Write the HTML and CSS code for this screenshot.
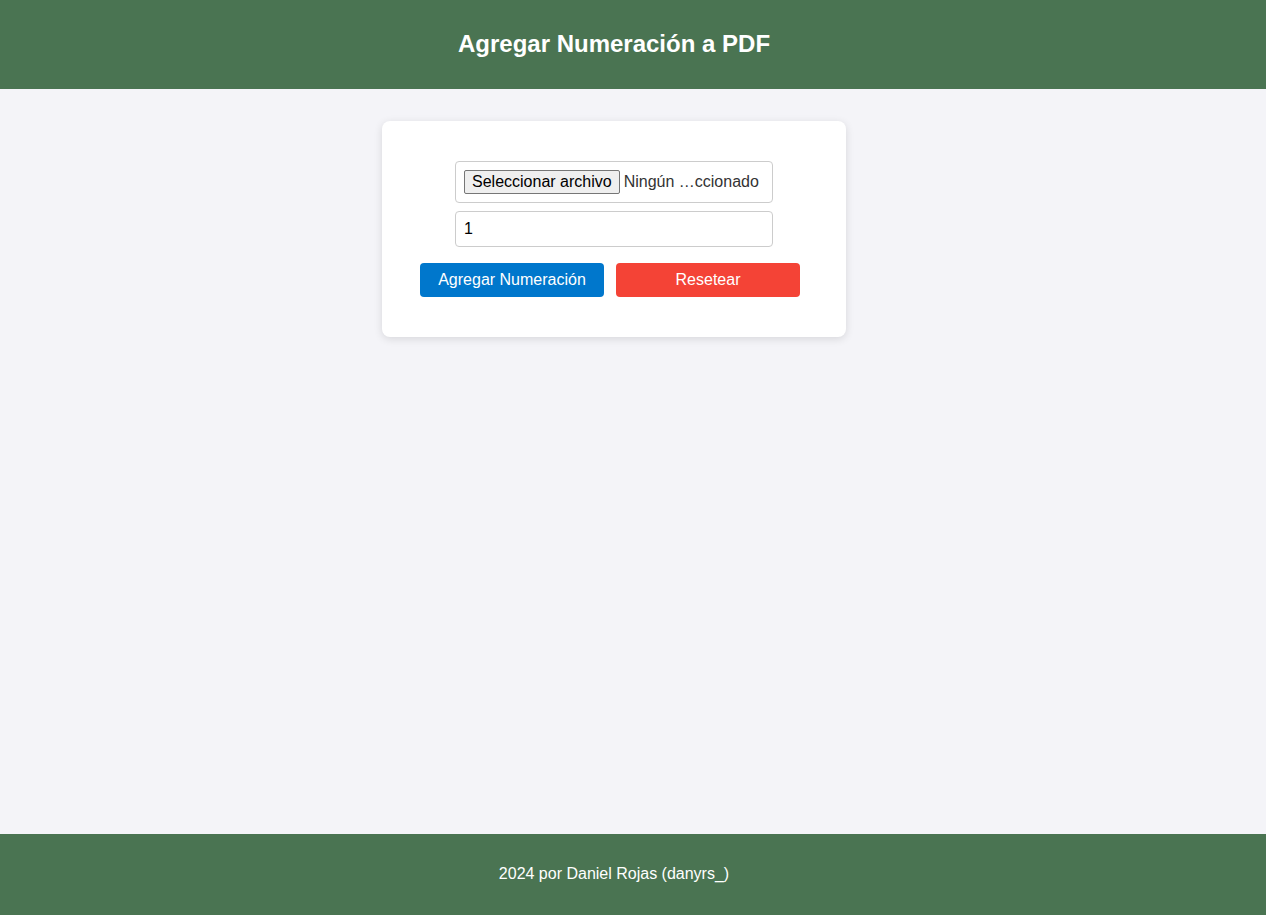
FILE: index.html
```html
<!DOCTYPE html>
<html lang="es">
<head>
<meta charset="utf-8">
<title>Agregar Numeración a PDF</title>
<link rel="stylesheet" href="styles.css">
</head>
<body>
<header class="site-header">
  <h1 class="site-title">Agregar Numeración a PDF</h1>
</header>
<main class="main">
  <div class="card">
    <div class="fields">
      <label class="file-field">
        <span class="file-button">Seleccionar archivo</span>
        <span class="file-name">Ningún …ccionado</span>
      </label>
      <input class="number-field" type="text" value="1">
    </div>
    <div class="actions">
      <button class="btn btn-primary" type="button">Agregar Numeración</button>
      <button class="btn btn-danger" type="button">Resetear</button>
    </div>
  </div>
</main>
<footer class="site-footer">
  <p class="footer-text">2024 por Daniel Rojas (danyrs_)</p>
</footer>
</body>
</html>
```
FILE: styles.css
```css
* { box-sizing: border-box; }
html, body { margin: 0; padding: 0; }
body {
  font-family: "Liberation Sans", Arial, sans-serif;
  background: #f4f4f8;
  min-height: 100vh;
  display: flex;
  flex-direction: column;
  color: #222;
}
.site-header {
  background: #4a7452;
  color: #fff;
  padding: 29px 38px 31px 0;
  text-align: center;
}
.site-title {
  margin: 0;
  font-size: 24px;
  line-height: 29px;
  font-weight: bold;
}
.main {
  flex: 1;
  display: flex;
  justify-content: center;
  align-items: flex-start;
  padding: 32px 38px 0 0;
}
.card {
  width: 464px;
  background: #fff;
  border-radius: 8px;
  box-shadow: 0 2px 8px rgba(0,0,0,0.12);
  padding: 40px 46px 40px 38px;
  display: flex;
  flex-direction: column;
  align-items: center;
}
.fields {
  display: flex;
  flex-direction: column;
  gap: 8px;
  width: 318px;
  margin-left: 8px;
}
.file-field {
  display: flex;
  align-items: center;
  height: 42px;
  border: 1px solid #ccc;
  border-radius: 4px;
  padding: 0 8px;
  font-size: 16px;
  white-space: nowrap;
  overflow: hidden;
}
.file-button {
  display: inline-block;
  height: 24px;
  line-height: 22px;
  padding: 0 7px;
  background: #efefef;
  border: 1px solid #767676;
  border-radius: 2px;
  color: #000;
  margin-right: 4px;
}
.file-name { color: #333; }
.number-field {
  width: 100%;
  height: 36px;
  border: 1px solid #ccc;
  border-radius: 4px;
  padding: 0 8px;
  font-family: inherit;
  font-size: 16px;
  color: #000;
  background: #fff;
}
.actions {
  display: flex;
  gap: 12px;
  margin-top: 16px;
  width: 380px;
}
.btn {
  flex: 1;
  height: 34px;
  border: none;
  border-radius: 4px;
  color: #fff;
  font-family: inherit;
  font-size: 16px;
  cursor: pointer;
}
.btn-primary { background: #0077cc; }
.btn-danger { background: #f44336; }
.site-footer {
  background: #4a7452;
  color: #fff;
  text-align: center;
  padding: 30px 38px 32px 0;
}
.footer-text {
  margin: 0;
  font-size: 16px;
  line-height: 19px;
}
```
